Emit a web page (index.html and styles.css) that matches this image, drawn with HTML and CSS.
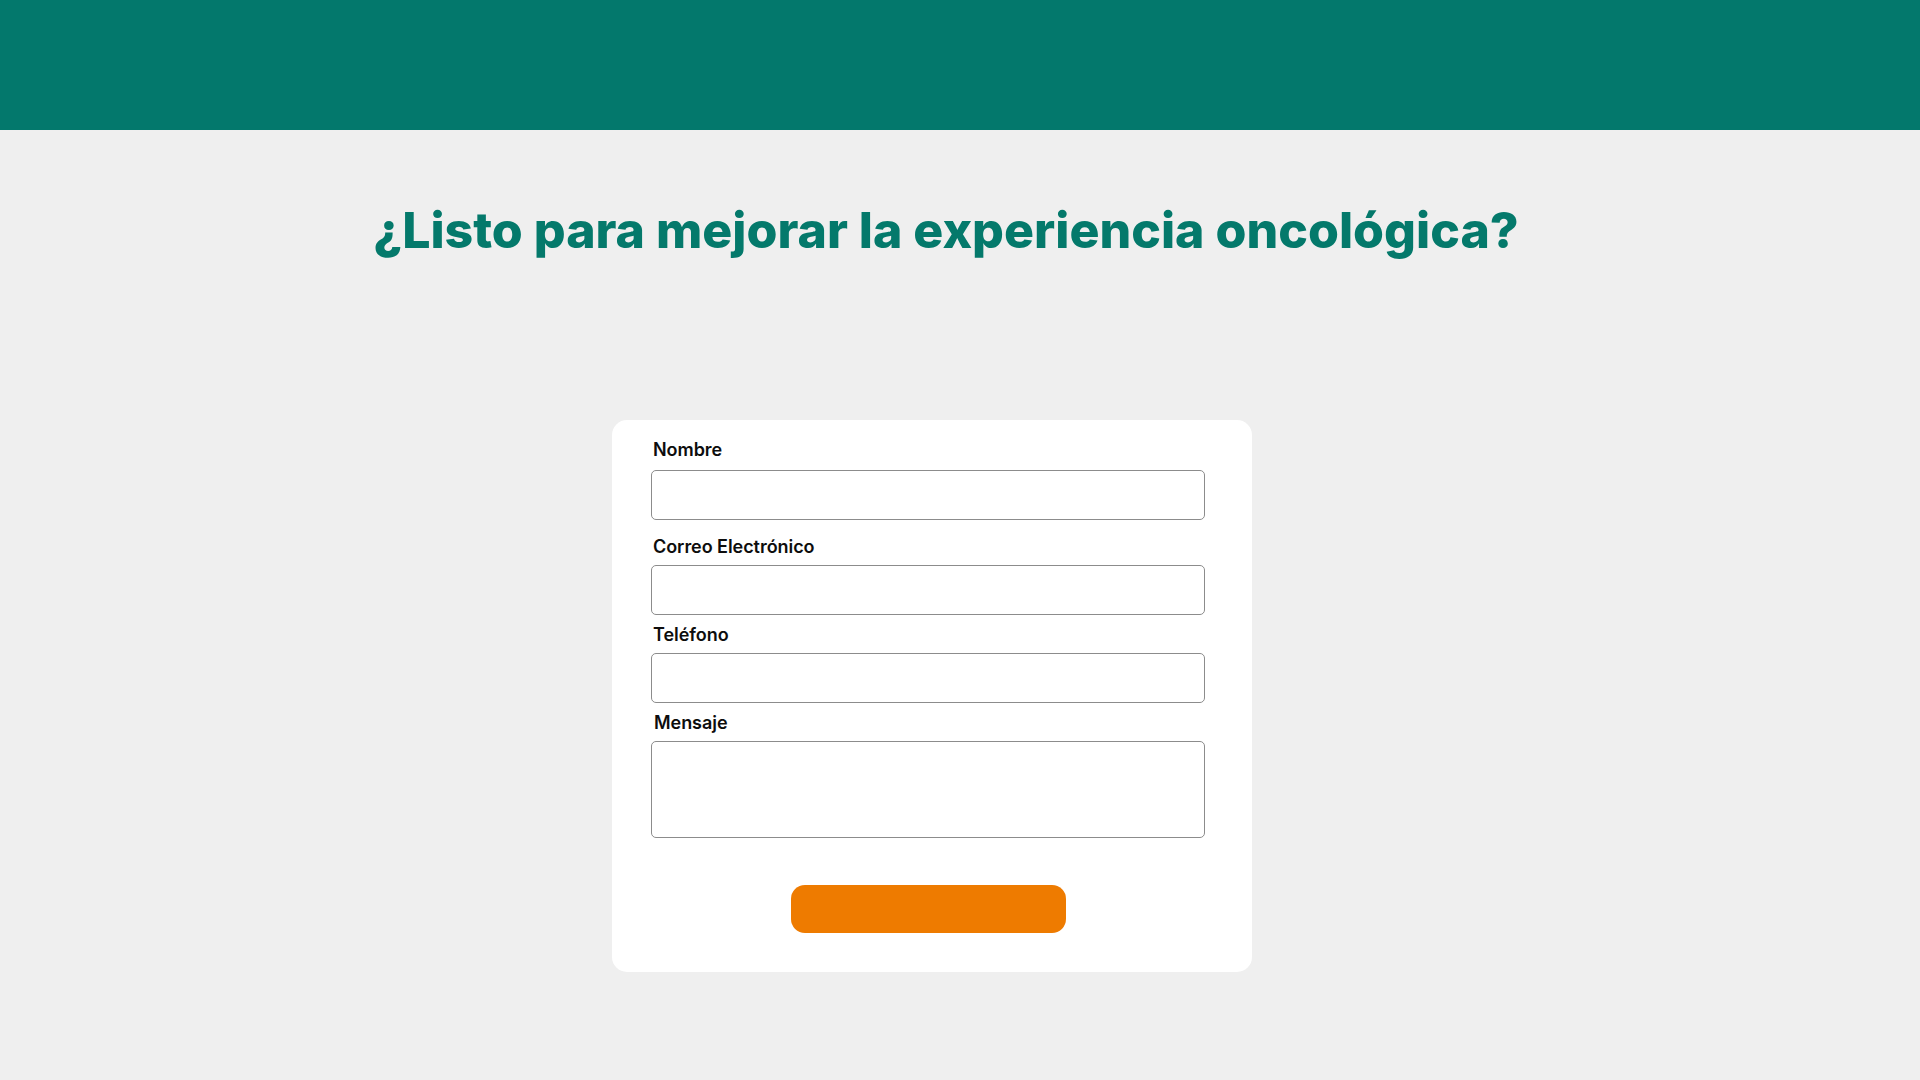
FILE: index.html
```html
<!DOCTYPE html>
<html lang="es">
<head>
<meta charset="utf-8">
<title>Contacto</title>
<link rel="stylesheet" href="styles.css">
</head>
<body>
<header class="topbar"></header>
<main class="contact">
  <h1 class="contact-title">¿Listo para mejorar la experiencia oncológica?</h1>
  <div class="card-wrap">
    <form class="card">
      <div class="field field-first">
        <label class="field-label" for="nombre">Nombre</label>
        <input class="field-input" id="nombre" type="text">
      </div>
      <div class="field field-wide">
        <label class="field-label" for="correo">Correo Electrónico</label>
        <input class="field-input" id="correo" type="email">
      </div>
      <div class="field">
        <label class="field-label" for="tel">Teléfono</label>
        <input class="field-input" id="tel" type="tel">
      </div>
      <div class="field">
        <label class="field-label field-label-indent" for="msg">Mensaje</label>
        <textarea class="field-input field-area" id="msg"></textarea>
      </div>
      <div class="actions">
        <button class="submit" type="submit"></button>
      </div>
    </form>
  </div>
</main>
</body>
</html>
```

FILE: styles.css
```css
html, body {
  margin: 0;
  padding: 0;
}

body {
  background: #efefef;
  font-family: Inter, "Noto Sans", "Liberation Sans", sans-serif;
  min-height: 1080px;
}

.topbar {
  height: 130px;
  background: #03786c;
}

.contact {
  padding-top: 70px;
}

.contact-title {
  margin: 0;
  padding-right: 28px;
  text-align: center;
  font-size: 50px;
  font-weight: 800;
  line-height: 60px;
  color: #04796b;
}

.card-wrap {
  display: flex;
  justify-content: center;
  padding-right: 56px;
  margin-top: 160px;
}

.card {
  width: 640px;
  box-sizing: border-box;
  background: #ffffff;
  border-radius: 15px;
  padding: 19px 47px 39px 39px;
  display: flex;
  flex-direction: column;
}

.field {
  display: flex;
  flex-direction: column;
  margin-top: 9px;
}

.field-first {
  margin-top: 0;
}

.field-wide {
  margin-top: 16px;
}

.field-label {
  font-size: 18px;
  font-weight: 600;
  line-height: 22px;
  color: #0d0d0d;
  margin-bottom: 7px;
  padding-left: 2px;
  letter-spacing: -0.05px;
}

.field-first .field-label {
  margin-bottom: 9px;
}

.field-label-indent {
  padding-left: 3px;
}

.field-input {
  box-sizing: border-box;
  width: 100%;
  height: 50px;
  margin: 0;
  border: 1px solid #8c8c8c;
  border-radius: 5px;
  background: #ffffff;
  font: inherit;
}

.field-area {
  height: 97px;
  resize: none;
  display: block;
}

.actions {
  display: flex;
  justify-content: center;
  margin-top: 47px;
}

.submit {
  width: 275px;
  height: 48px;
  border: 0;
  border-radius: 14px;
  background: #ee7b00;
}
```
